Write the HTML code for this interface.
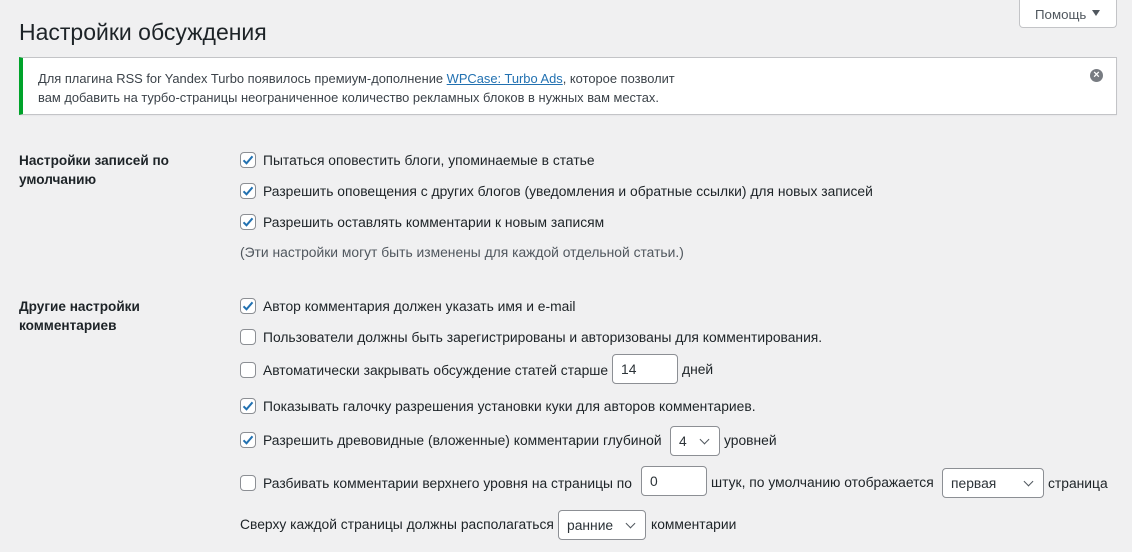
<!DOCTYPE html>
<html><head><meta charset="utf-8"><style>
*{box-sizing:border-box}
body{margin:0;width:1132px;height:552px;overflow:hidden;background:#f0f0f1;font-family:"Liberation Sans",Arial,sans-serif;font-size:13.85px;color:#3c434a;position:relative}
.help{position:absolute;left:1019px;top:-1px;width:98px;height:29px;background:#fff;border:1px solid #c3c4c7;border-top:none;border-radius:0 0 4px 4px;color:#50575e;font-size:13.3px;padding-top:8px;padding-left:15px}
.help:after{content:"";position:absolute;right:16px;top:11px;border:4px solid transparent;border-top:6px solid #50575e;border-bottom:0}
h1{position:absolute;left:19px;top:19px;margin:0;font-weight:400;font-size:23px;color:#1d2327}
.notice{position:absolute;left:19px;top:57px;width:1098px;height:58px;background:#fff;border:1px solid #c3c4c7;border-left:4px solid #00a32a;box-shadow:0 1px 1px rgba(0,0,0,.04);font-size:12.9px;color:#3c434a;padding:11px 0 0 15px;line-height:19px}
.notice a{color:#2271b1}
.x{position:absolute;right:13px;top:11px;width:13px;height:13px;border-radius:50%;background:#787c82;color:#fff;font-size:11px;line-height:13px;text-align:center;font-weight:bold}
.lbl{position:absolute;left:19px;font-weight:bold;color:#1d2327;line-height:19px;font-size:13.6px}
.cb{position:absolute;left:240px;width:16px;height:16px;border:1px solid #8c8f94;border-radius:4px;background:#fff}
.cb.on svg{position:absolute;left:-1px;top:-1px}
.t{position:absolute;white-space:nowrap;color:#1d2327;line-height:18px}
.in{position:absolute;height:30px;border:1px solid #8c8f94;border-radius:4px;background:#fff;padding:6px 8px;color:#2c3338;font-size:13.85px;line-height:16px}
.sel:after{content:"";position:absolute;right:11px;top:9px;width:6px;height:6px;border-right:1.6px solid #50575e;border-bottom:1.6px solid #50575e;transform:rotate(45deg)}
</style></head><body>
<div class="help">Помощь</div>
<h1>Настройки обсуждения</h1>
<div class="notice">Для плагина RSS for Yandex Turbo появилось премиум-дополнение <a href="#">WPCase: Turbo Ads</a>, которое позволит<br>вам добавить на турбо-страницы неограниченное количество рекламных блоков в нужных вам местах.<div class="x">×</div></div>

<div class="lbl" style="top:151px">Настройки записей по<br>умолчанию</div>
<div class="lbl" style="top:297px">Другие настройки<br>комментариев</div>

<div class="cb on" style="top:152px"><svg width="16" height="16" viewBox="0 0 16 16"><path d="M3.5 8.3l3 3 6-7" fill="none" stroke="#2271b1" stroke-width="2"/></svg></div>
<div class="t" style="left:263px;top:151px">Пытаться оповестить блоги, упоминаемые в статье</div>
<div class="cb on" style="top:183px"><svg width="16" height="16" viewBox="0 0 16 16"><path d="M3.5 8.3l3 3 6-7" fill="none" stroke="#2271b1" stroke-width="2"/></svg></div>
<div class="t" style="left:263px;top:182px">Разрешить оповещения с других блогов (уведомления и обратные ссылки) для новых записей</div>
<div class="cb on" style="top:214px"><svg width="16" height="16" viewBox="0 0 16 16"><path d="M3.5 8.3l3 3 6-7" fill="none" stroke="#2271b1" stroke-width="2"/></svg></div>
<div class="t" style="left:263px;top:213px">Разрешить оставлять комментарии к новым записям</div>
<div class="t" style="left:240px;top:243px;color:#50575e">(Эти настройки могут быть изменены для каждой отдельной статьи.)</div>

<div class="cb on" style="top:298px"><svg width="16" height="16" viewBox="0 0 16 16"><path d="M3.5 8.3l3 3 6-7" fill="none" stroke="#2271b1" stroke-width="2"/></svg></div>
<div class="t" style="left:263px;top:297px">Автор комментария должен указать имя и e-mail</div>
<div class="cb" style="top:329px"></div>
<div class="t" style="left:263px;top:328px">Пользователи должны быть зарегистрированы и авторизованы для комментирования.</div>
<div class="cb" style="top:362px"></div>
<div class="t" style="left:263px;top:361px">Автоматически закрывать обсуждение статей старше</div>
<div class="in" style="left:612px;top:354px;width:66px">14</div>
<div class="t" style="left:682px;top:360px">дней</div>
<div class="cb on" style="top:398px"><svg width="16" height="16" viewBox="0 0 16 16"><path d="M3.5 8.3l3 3 6-7" fill="none" stroke="#2271b1" stroke-width="2"/></svg></div>
<div class="t" style="left:263px;top:397px">Показывать галочку разрешения установки куки для авторов комментариев.</div>
<div class="cb on" style="top:432px"><svg width="16" height="16" viewBox="0 0 16 16"><path d="M3.5 8.3l3 3 6-7" fill="none" stroke="#2271b1" stroke-width="2"/></svg></div>
<div class="t" style="left:263px;top:431px">Разрешить древовидные (вложенные) комментарии глубиной</div>
<div class="in sel" style="left:670px;top:426px;width:50px">4</div>
<div class="t" style="left:724px;top:431px">уровней</div>
<div class="cb" style="top:475px"></div>
<div class="t" style="left:263px;top:474px">Разбивать комментарии верхнего уровня на страницы по</div>
<div class="in" style="left:641px;top:466px;width:66px">0</div>
<div class="t" style="left:711px;top:473px">штук, по умолчанию отображается</div>
<div class="in sel" style="left:942px;top:468px;width:102px">первая</div>
<div class="t" style="left:1048px;top:474px">страница</div>
<div class="t" style="left:240px;top:515px">Сверху каждой страницы должны располагаться</div>
<div class="in sel" style="left:558px;top:510px;width:88px">ранние</div>
<div class="t" style="left:651px;top:515px">комментарии</div>
</body></html>
